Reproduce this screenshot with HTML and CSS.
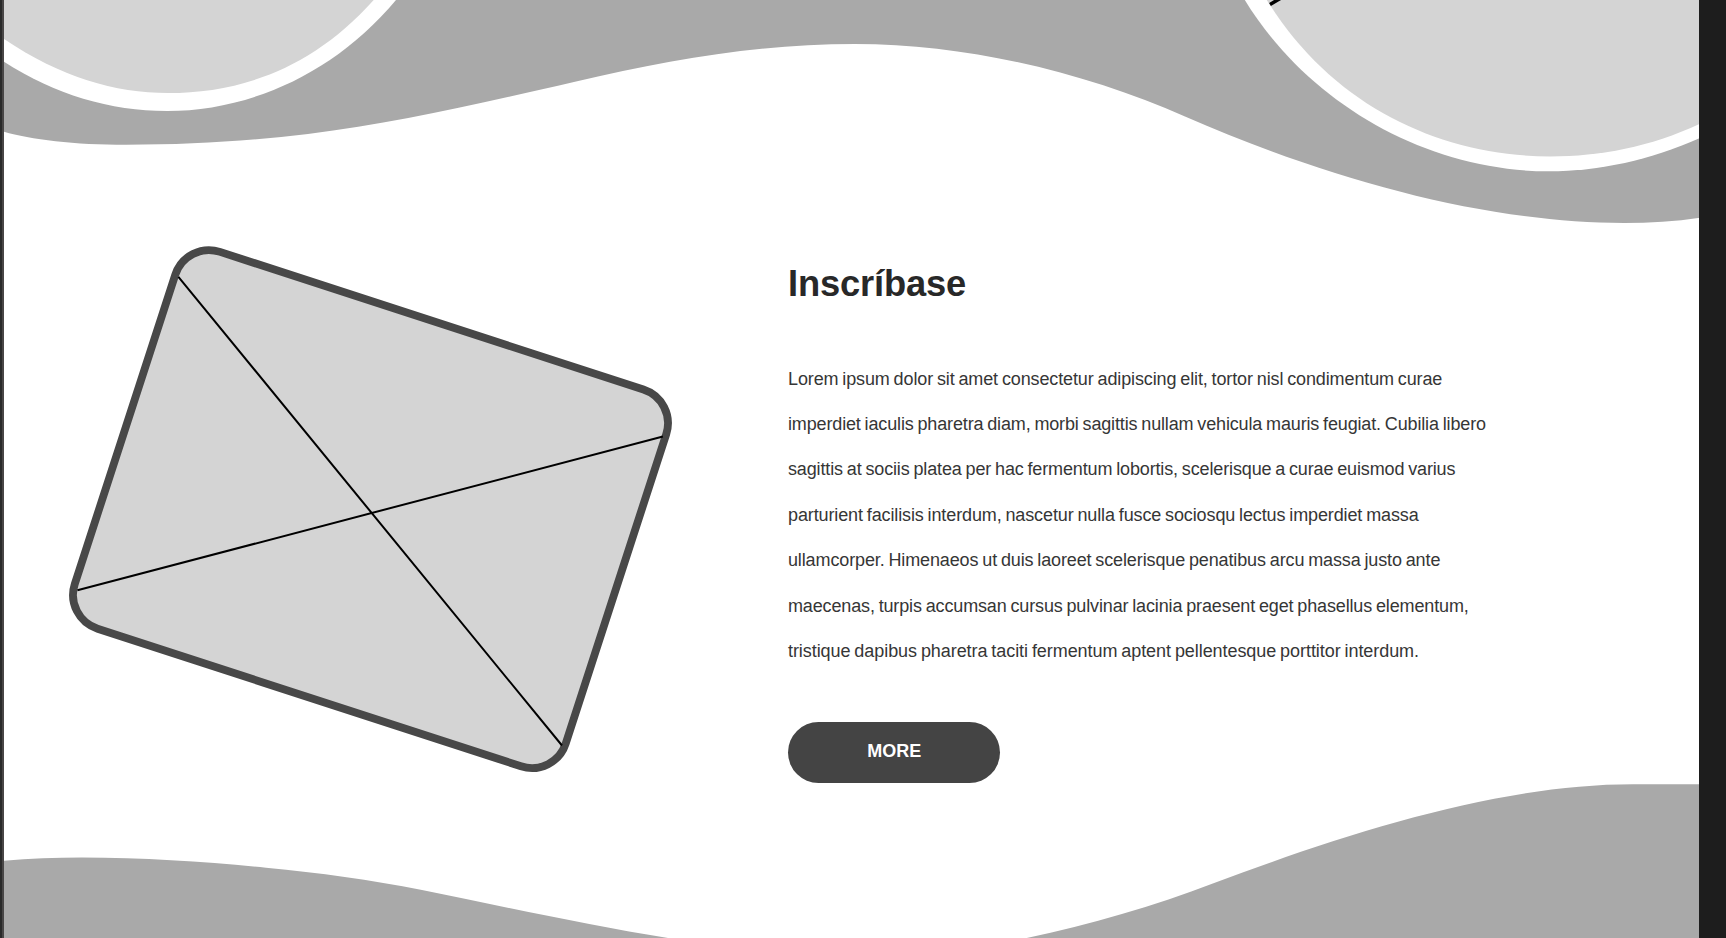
FILE: index.html
```html
<!DOCTYPE html>
<html lang="es">
<head>
<meta charset="utf-8">
<title>Inscríbase</title>
<link rel="stylesheet" href="styles.css">
</head>
<body>
<main class="page">
  <svg class="backdrop" viewBox="0 0 1726 938" aria-hidden="true">
    <path class="wave" d="M4 0V131.7C30 139.5 75 144.8 126 144.8C190 144.8 250 141 308 134C396 123 480 103.5 575 81.7C670 59.6 758 44 855 44C970 44 1087 73.5 1185 116.5C1335 182 1490 223 1624 223C1650 223 1675 221.5 1700 217.7V0Z"/>
    <path class="ring" d="M4 0V61.7C55 94.5 110 111 167 111C250 111 335 73 396 0Z"/>
    <path class="disc" d="M4 0V39C60 77 115 93 168 93C240 93 312 69 373.7 0Z"/>
    <path class="ring" d="M1244.8 0C1307 102 1425 171.3 1548.6 171.3C1600 171.3 1650 160 1700 138V0Z"/>
    <path class="disc" d="M1266.8 0C1332 106 1440 156.4 1550.4 156.4C1600 156.4 1650 147 1700 123.7V0Z"/>
    <path class="stub" d="M1270 4.4L1281 -2"/>
    <path class="wave" d="M4 938V860.7C30 858.5 55 857.5 82 857.5C145 857.5 210 862 266 867.7C320 873 370 879.5 422 890C505 907 590 925.5 668 938Z"/>
    <path class="wave" d="M1026.8 938C1090 924.5 1155 906 1213.5 883.3C1350 832 1500 784.3 1633 784.3H1700V938Z"/>
  </svg>
  <div class="edge-left"></div>
  <section class="signup">
    <svg class="picture" viewBox="0 0 604 527" aria-hidden="true">
      <g transform="translate(-68.6 -245.5)">
        <rect class="frame" x="112" y="310.5" width="516.2" height="396.2" rx="35.5" transform="rotate(18 370.1 508.6)"/>
        <path class="cross" d="M178 276.3L561.6 745M662.5 436L77 589.8"/>
      </g>
    </svg>
    <div class="copy">
      <h1 class="title">Inscríbase</h1>
      <p class="text">
        <span class="line l1">Lorem ipsum dolor sit amet consectetur adipiscing elit, tortor nisl condimentum curae</span>
        <span class="line l2">imperdiet iaculis pharetra diam, morbi sagittis nullam vehicula mauris feugiat. Cubilia libero</span>
        <span class="line l3">sagittis at sociis platea per hac fermentum lobortis, scelerisque a curae euismod varius</span>
        <span class="line l4">parturient facilisis interdum, nascetur nulla fusce sociosqu lectus imperdiet massa</span>
        <span class="line l5">ullamcorper. Himenaeos ut duis laoreet scelerisque penatibus arcu massa justo ante</span>
        <span class="line l6">maecenas, turpis accumsan cursus pulvinar lacinia praesent eget phasellus elementum,</span>
        <span class="line l7">tristique dapibus pharetra taciti fermentum aptent pellentesque porttitor interdum.</span>
      </p>
      <a class="more" href="#">MORE</a>
    </div>
  </section>
  <div class="edge-right"></div>
</main>
</body>
</html>
```
FILE: styles.css
```css
* { box-sizing: border-box; }
body { margin: 0; background: #fff; overflow: hidden; }
.page {
  position: relative;
  display: flex;
  width: 1726px;
  height: 938px;
  overflow: hidden;
  font-family: "Liberation Sans", Arial, sans-serif;
  color: #282828;
}
.backdrop { position: absolute; inset: 0; width: 1726px; height: 938px; }
.wave { fill: #a9a9a9; }
.ring { fill: #fff; }
.disc { fill: #d4d4d4; }
.stub { stroke: #000; stroke-width: 3.5; }
.edge-left { position: relative; width: 4px; background: #2a2a2a; border-right: 2px solid #484646; }
.edge-right { position: relative; width: 26.6px; background: #1d1d1d; }
.signup { position: relative; flex: 1; display: flex; align-items: flex-start; padding-left: 64.6px; }
.picture { width: 604px; height: 527px; margin-top: 245.5px; flex: none; }
.frame { fill: #d4d4d4; stroke: #484848; stroke-width: 7.8; }
.cross { stroke: #000; stroke-width: 2; fill: none; }
.copy { margin-left: 115.4px; padding-top: 263px; }
.title { margin: 0; font-size: 36.3px; line-height: 42px; font-weight: 700; letter-spacing: -0.15px; }
.text { margin: 51.5px 0 0; font-size: 18px; line-height: 45.45px; color: #363636; }
.line { display: block; width: max-content; word-spacing: -1px; }
.l1 { letter-spacing: -0.118px; }
.l2 { letter-spacing: -0.143px; }
.l3 { letter-spacing: -0.136px; }
.l4 { letter-spacing: -0.117px; }
.l5 { letter-spacing: -0.123px; }
.l6 { letter-spacing: -0.14px; }
.l7 { letter-spacing: -0.065px; }
.more {
  display: flex;
  align-items: center;
  justify-content: center;
  width: 212.4px;
  height: 61.4px;
  margin-top: 47px;
  padding-bottom: 2px;
  border-radius: 31px;
  background: #444;
  color: #fff;
  font-size: 18px;
  font-weight: 700;
  text-decoration: none;
}
```
